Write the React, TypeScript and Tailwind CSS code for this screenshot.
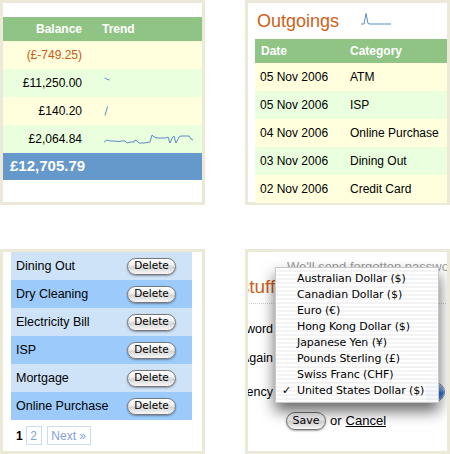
import React from 'react';

// ── Sample data ──────────────────────────────────────────────────────────────
const balances = [
  { amount: '(£-749.25)', negative: true, trend: 'none' },
  { amount: '£11,250.00', negative: false, trend: 'tick' },
  { amount: '£140.20', negative: false, trend: 'slash' },
  { amount: '£2,064.84', negative: false, trend: 'long' },
];

const outgoings = [
  { date: '05 Nov 2006', category: 'ATM' },
  { date: '05 Nov 2006', category: 'ISP' },
  { date: '04 Nov 2006', category: 'Online Purchase' },
  { date: '03 Nov 2006', category: 'Dining Out' },
  { date: '02 Nov 2006', category: 'Credit Card' },
];

const categories = ['Dining Out', 'Dry Cleaning', 'Electricity Bill', 'ISP', 'Mortgage', 'Online Purchase'];

const currencies = [
  'Australian Dollar ($)',
  'Canadian Dollar ($)',
  'Euro (€)',
  'Hong Kong Dollar ($)',
  'Japanese Yen (¥)',
  'Pounds Sterling (£)',
  'Swiss Franc (CHF)',
  'United States Dollar ($)',
];

const longTrend =
  '0,9 3,7 6,8 10,8 14,8.5 18,8 21,8 23,10 27,9 30,9 31,7 33,8 35,10 40,10 43,9.5 46,9 48,2 50,4 53,5 58,5 62,5 64,4 66,10 68,5 70,3 72,10 75,4 77,3 82,3 85,3 87,6 89,7';

// ── Tiny sparklines ──────────────────────────────────────────────────────────
const Trend = ({ kind }: { kind: string }) => {
  if (kind === 'tick')
    return (
      <svg width="8" height="6" className="-mt-[6px]">
        <polyline points="0.5,1 2.5,2 5.5,3" fill="none" stroke="#5b8bc9" strokeWidth="1" />
      </svg>
    );
  if (kind === 'slash')
    return (
      <svg width="6" height="10">
        <polyline points="1,9.5 3.5,0.5" fill="none" stroke="#5b8bc9" strokeWidth="1" />
      </svg>
    );
  if (kind === 'long')
    return (
      <svg width="91" height="12">
        <polyline points={longTrend} fill="none" stroke="#5b8bc9" strokeWidth="1" />
      </svg>
    );
  return null;
};

const panel = 'h-[205px] border-[3px] border-[#ece9d8] bg-white';
const sans = "font-['Liberation_Sans',Arial,sans-serif]";
const lucida = "font-['DejaVu_Sans','Lucida_Grande',sans-serif]";
const aqua =
  'rounded-full border border-[#777] bg-[linear-gradient(to_bottom,#ffffff_0%,#f2f2f2_40%,#d4d4d4_55%,#f8f8f8_100%)] text-black shadow-[0_1px_2px_rgba(0,0,0,0.35)]';

export default function App() {
  return (
    <div className={`h-[454px] w-[450px] bg-white ${sans}`}>
      <div className="grid grid-cols-[205px_205px] grid-rows-[205px_205px] gap-x-[40px] gap-y-[44px]">
        {/* Balances */}
        <div className={panel}>
          <div className="mt-[14px] text-[12px] text-black">
            <div className="flex h-[24px] items-center bg-[#8fc485] font-bold text-white">
              <span className="w-[88px] pr-[9px] text-right">Balance</span>
              <span className="pl-[11px]">Trend</span>
            </div>
            {balances.map((b, i) => (
              <div
                key={b.amount}
                className={`flex h-[28px] items-center ${i % 2 === 0 ? 'bg-[#ffffdd]' : 'bg-[#eaffdd]'}`}
              >
                <span className={`w-[88px] pr-[9px] text-right ${b.negative ? 'text-[#cc5a1a]' : ''}`}>
                  {b.amount}
                </span>
                <span className="flex items-center pl-[13px]">
                  <Trend kind={b.trend} />
                </span>
              </div>
            ))}
            <div className="flex h-[27px] items-center bg-[#6699cb] pl-[7px] text-[15px] font-bold text-white">
              £12,705.79
            </div>
          </div>
        </div>

        {/* Outgoings */}
        <div className={panel}>
          <div className="flex h-[36px] items-center pl-[9px]">
            <h2 className="text-[18px] leading-[22px] text-[#cc6119]">Outgoings</h2>
            <svg width="30" height="12" className="ml-[22px] -mt-[4px]">
              <polyline points="0,11 3,11 5,0.5 7,10.5 9,11 30,11" fill="none" stroke="#5b8bc9" strokeWidth="1" />
            </svg>
          </div>
          <div className="ml-[7px] text-[12px] text-black">
            <div className="flex h-[24px] items-center bg-[#8fc485] font-bold text-white">
              <span className="w-[95px] pl-[6px]">Date</span>
              <span>Category</span>
            </div>
            {outgoings.map((o, i) => (
              <div
                key={o.date + o.category}
                className={`flex h-[28px] items-center ${i % 2 === 0 ? 'bg-[#ffffdd]' : 'bg-[#eaffdd]'}`}
              >
                <span className="w-[95px] pl-[5px]">{o.date}</span>
                <span>{o.category}</span>
              </div>
            ))}
          </div>
        </div>

        {/* Categories */}
        <div className={panel}>
          <div className="ml-[8px] w-[181px] text-[12.5px] text-black">
            {categories.map((c, i) => (
              <div
                key={c}
                className={`flex h-[28px] items-center justify-between pl-[5px] pr-[16px] ${
                  i % 2 === 0 ? 'bg-[#cfe3f8]' : 'bg-[#9ccbfb]'
                }`}
              >
                <span>{c}</span>
                <button className={`flex h-[17px] w-[49px] items-center justify-center text-[10.5px] ${aqua} ${lucida}`}>
                  Delete
                </button>
              </div>
            ))}
            <div className="mt-[6px] flex h-[19px] items-center pl-[5px] text-[12px]">
              <span className="font-bold">1</span>
              <span className="ml-[3px] flex h-[19px] w-[16px] items-center justify-center border border-[#cadcf0] text-[#7fa3d6]">
                2
              </span>
              <span className="ml-[5px] flex h-[19px] w-[44px] items-center justify-center border border-[#cadcf0] text-[#7fa3d6]">
                Next »
              </span>
            </div>
          </div>
        </div>

        {/* Settings form with open currency menu */}
        <div className={`relative overflow-hidden ${panel}`}>
          <div className="-ml-[80px] w-[280px] text-black">
            <p className="whitespace-nowrap pl-[119px] pt-[7px] text-[13px] leading-[15px] text-[#9a9a9a]">
              We'll send forgotten passwords here.
            </p>
            <h2 className="mt-[2px] whitespace-nowrap pl-[28px] text-[19px] leading-[22px] text-[#cc6119]">
              Your stuff
            </h2>
            <div className="mt-[5px] border-b border-dotted border-[#cfcfcf]" />
            <div className="mt-[14px] flex h-[22px] items-center">
              <span className="w-[105px] text-right text-[12.5px]">Password</span>
              <div className="ml-[13px] h-[22px] w-[147px] border border-[#c4c4c4]" />
            </div>
            <div className="mt-[8px] flex h-[20px] items-center">
              <span className="w-[105px] whitespace-nowrap text-right text-[12.5px]">Password Again</span>
              <div className="ml-[13px] h-[20px] w-[147px] border border-[#c4c4c4]" />
            </div>
            <div className="mt-[14px] flex h-[20px] items-center">
              <span className="w-[105px] text-right text-[12.5px]">Currency</span>
              <div className="ml-[13px] flex h-[20px] w-[159px] overflow-hidden rounded-r-full border border-[#8a8a8a] bg-white">
                <div className="flex-1" />
                <div className="w-[18px] bg-[linear-gradient(to_bottom,#a9cdf5_0%,#5e9be6_45%,#2f74d6_55%,#6aa9ee_100%)]" />
              </div>
            </div>
            <div className="mt-[10px] flex h-[18px] items-center pl-[118px]">
              <button className={`flex h-[18px] w-[40px] items-center justify-center text-[11px] ${aqua} ${lucida}`}>
                Save
              </button>
              <span className="ml-[4px] text-[13px]">or</span>
              <a className="ml-[4px] text-[13px] text-black underline">Cancel</a>
            </div>
          </div>

          {/* popup menu */}
          <ul
            className={`absolute left-[27px] top-[15px] w-[164px] border border-[#c9c9c9] bg-[repeating-linear-gradient(180deg,rgba(255,255,255,0.94)_0px,rgba(255,255,255,0.94)_2px,rgba(243,243,243,0.94)_2px,rgba(243,243,243,0.94)_4px)] py-[3px] text-[11px] tracking-[-0.1px] text-black shadow-[0_8px_14px_rgba(0,0,0,0.6)] ${lucida}`}
          >
            {currencies.map((c, i) => (
              <li key={c} className="flex h-[16px] items-center whitespace-nowrap">
                <span className="w-[21px] pl-[6px]">{i === currencies.length - 1 ? '✓' : ''}</span>
                <span>{c}</span>
              </li>
            ))}
          </ul>
        </div>
      </div>
    </div>
  );
}
